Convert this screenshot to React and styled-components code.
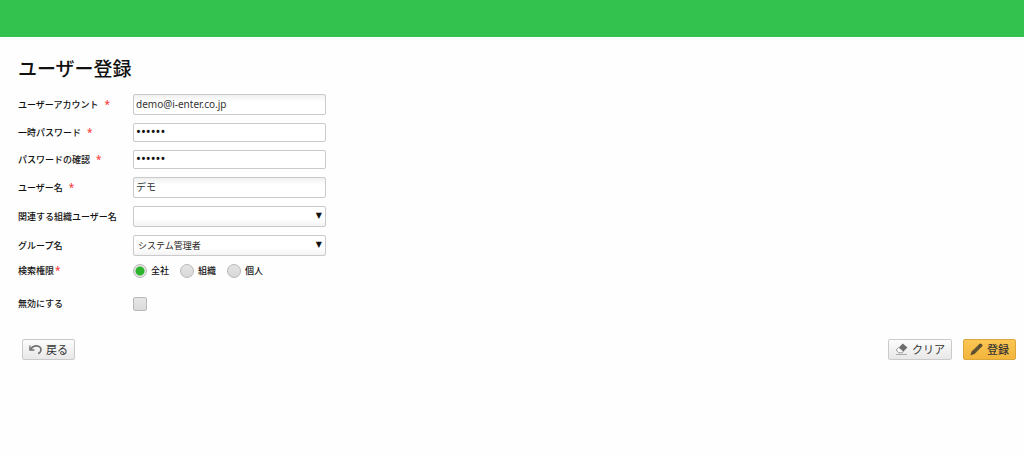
import React, { useState } from "react";
import styled, { createGlobalStyle } from "styled-components";

const GlobalStyle = createGlobalStyle`
  * {
    box-sizing: border-box;
  }
  body {
    margin: 0;
    background-color: #fefefe;
    color: #111;
    font-family: "Noto Sans", "Noto Sans CJK JP", sans-serif;
    font-size: 9px;
  }
`

const Header = styled.header`
  height: 37px;
  background-color: #33c24d;
`

const Main = styled.main`
  padding: 17px 8px 16px 18px;
`

const Title = styled.h1`
  margin: 0 0 10px;
  font-size: 19px;
  line-height: 30px;
  font-weight: 500;
`

const Form = styled.form`
  display: flex;
  flex-direction: column;
  gap: 8px;
`

const Row = styled.div`
  display: grid;
  grid-template-columns: 115px 193px;
  align-items: center;
  margin-top: ${(props) => (props.$spaced ? "11px" : "0")};
`

const Label = styled.label`
  line-height: 14px;
  font-weight: 500;
  white-space: nowrap;
`

const Required = styled.span`
  margin-left: ${(props) => (props.$tight ? "1px" : "6px")};
  color: #ff4040;
  font-size: 10px;
  line-height: 12px;
`

const Input = styled.input`
  width: 100%;
  height: 21px;
  padding: 0 2px 2px;
  border: 1px solid #cacaca;
  border-radius: 2px;
  background: linear-gradient(#f0f0f0, #fff 7px);
  color: #333;
  font-family: inherit;
  font-size: 10px;
`

const PasswordInput = styled(Input)`
  height: 19px;
  padding-bottom: 4px;
  background: #fff;
  color: #111;
  font-size: 13px;
`

const SelectBox = styled.div`
  position: relative;
  height: 21px;
  &::after {
    content: "▼";
    position: absolute;
    top: 0;
    right: 4px;
    color: #111;
    font-family: "DejaVu Sans", sans-serif;
    font-size: 8px;
    line-height: 20px;
    pointer-events: none;
  }
`

const Select = styled.select`
  appearance: none;
  width: 100%;
  height: 21px;
  padding: 0 16px 1px 4px;
  border: 1px solid #cacaca;
  border-radius: 2px;
  background: linear-gradient(#fff 12px, #f3f3f3);
  color: #222;
  font-family: inherit;
  font-size: 9px;
`

const RadioGroup = styled.div`
  display: flex;
  gap: 11px;
`

const RadioLabel = styled.label`
  display: flex;
  align-items: center;
  gap: 4px;
  line-height: 14px;
  font-weight: 500;
  white-space: nowrap;
`

const Radio = styled.input`
  appearance: none;
  flex: none;
  width: 14px;
  height: 14px;
  margin: 0;
  border: 1px solid #b8b8b8;
  border-radius: 50%;
  background: linear-gradient(#e4e4e4, #d8d8d8);
  &:checked {
    background: radial-gradient(circle, #2cb42c 4px, #e4e4e4 5px);
  }
`

const Checkbox = styled.input`
  appearance: none;
  width: 14px;
  height: 14px;
  margin: 0;
  border: 1px solid #b8b8b8;
  border-radius: 2px;
  background: linear-gradient(#e6e6e6, #dadada);
  &:checked {
    background: #2cb42c;
  }
`

const Buttons = styled.div`
  display: flex;
  justify-content: space-between;
  margin-top: 20px;
  padding-left: 4px;
`

const ButtonGroup = styled.div`
  display: flex;
  gap: 11px;
`

const Button = styled.button`
  display: flex;
  align-items: center;
  gap: 4px;
  height: 21px;
  padding: 0 6px;
  border: 1px solid ${(props) => (props.$primary ? "#dba63a" : "#cacaca")};
  border-radius: 2px;
  background: ${(props) =>
    props.$primary
      ? "linear-gradient(#fbc653, #f2b53c)"
      : "linear-gradient(#fcfcfc, #e8e8e8)"};
  color: #333;
  font-family: inherit;
  font-size: 11px;
  line-height: 18px;
  font-weight: ${(props) => (props.$primary ? "500" : "400")};
  cursor: pointer;
`

const BackIcon = () => (
  <svg width="13" height="13" viewBox="0 0 13 13" fill="none" stroke="#707070">
    <path d="M0.9 2.6V7H5.4" strokeWidth="1.3" />
    <path d="M1.4 6.6C3 4 5 2.8 7.4 2.8C10.6 2.8 12.4 5.2 11.8 7.6C11.5 9 10.6 10 9.2 10.6" strokeWidth="1.7" />
  </svg>
)

const EraserIcon = () => (
  <svg width="13" height="13" viewBox="0 0 13 13">
    <path d="M7.8 0.4L12.4 4.4L8.4 8.6L3.8 4.4Z" fill="#6c6c6c" />
    <path d="M3.8 4.4L8.4 8.6L6.8 9.8H3.8L1.2 7Z" fill="#fff" stroke="#888" strokeWidth="0.9" />
    <path d="M1 11.5H12" stroke="#aaa" />
  </svg>
)

const PencilIcon = () => (
  <svg width="13" height="13" viewBox="0 0 13 13">
    <path d="M9.4 0.9Q10.4 0 11.5 0.9L12.2 1.6Q13 2.6 12 3.6L4.8 10.8L0.4 12.4L1.6 8.4Z" fill="#574b30" />
    <path d="M8.6 3L3.4 8.2M10 4.4L4.8 9.6" stroke="#8f7b48" strokeWidth="0.6" />
  </svg>
)

const scopes = ["全社", "組織", "個人"];

const App = () => {
  const [form, setForm] = useState({
    account: "demo@i-enter.co.jp",
    password: "demo12",
    confirm: "demo12",
    name: "デモ",
    related: "",
    group: "システム管理者",
    scope: "全社",
    disabled: false,
  });

  const onChange = (event) => {
    const { name, value, type, checked } = event.target;
    setForm({ ...form, [name]: type === "checkbox" ? checked : value });
  };

  const onClear = () => {
    setForm({
      account: "",
      password: "",
      confirm: "",
      name: "",
      related: "",
      group: "システム管理者",
      scope: "全社",
      disabled: false,
    });
  };

  return (
    <>
      <GlobalStyle />
      <Header />
      <Main>
        <Title>ユーザー登録</Title>
        <Form onSubmit={(event) => event.preventDefault()}>
          <Row>
            <Label htmlFor="account">ユーザーアカウント<Required>*</Required></Label>
            <Input id="account" name="account" value={form.account} onChange={onChange} />
          </Row>
          <Row>
            <Label htmlFor="password">一時パスワード<Required>*</Required></Label>
            <PasswordInput type="password" id="password" name="password" value={form.password} onChange={onChange} />
          </Row>
          <Row>
            <Label htmlFor="confirm">パスワードの確認<Required>*</Required></Label>
            <PasswordInput type="password" id="confirm" name="confirm" value={form.confirm} onChange={onChange} />
          </Row>
          <Row>
            <Label htmlFor="name">ユーザー名<Required>*</Required></Label>
            <Input id="name" name="name" value={form.name} onChange={onChange} />
          </Row>
          <Row>
            <Label htmlFor="related">関連する組織ユーザー名</Label>
            <SelectBox>
              <Select id="related" name="related" value={form.related} onChange={onChange}>
                <option value=""></option>
              </Select>
            </SelectBox>
          </Row>
          <Row>
            <Label htmlFor="group">グループ名</Label>
            <SelectBox>
              <Select id="group" name="group" value={form.group} onChange={onChange}>
                <option>システム管理者</option>
              </Select>
            </SelectBox>
          </Row>
          <Row>
            <Label as="span" id="scope-label">検索権限<Required $tight>*</Required></Label>
            <RadioGroup role="radiogroup" aria-labelledby="scope-label">
              {scopes.map((scope) => (
                <RadioLabel key={scope}>
                  <Radio type="radio" name="scope" value={scope} checked={form.scope === scope} onChange={onChange} />
                  {scope}
                </RadioLabel>
              ))}
            </RadioGroup>
          </Row>
          <Row $spaced>
            <Label htmlFor="disabled">無効にする</Label>
            <Checkbox type="checkbox" id="disabled" name="disabled" checked={form.disabled} onChange={onChange} />
          </Row>
          <Buttons>
            <Button type="button"><BackIcon />戻る</Button>
            <ButtonGroup>
              <Button type="button" onClick={onClear}><EraserIcon />クリア</Button>
              <Button type="submit" $primary><PencilIcon />登録</Button>
            </ButtonGroup>
          </Buttons>
        </Form>
      </Main>
    </>
  );
};

export default App;
